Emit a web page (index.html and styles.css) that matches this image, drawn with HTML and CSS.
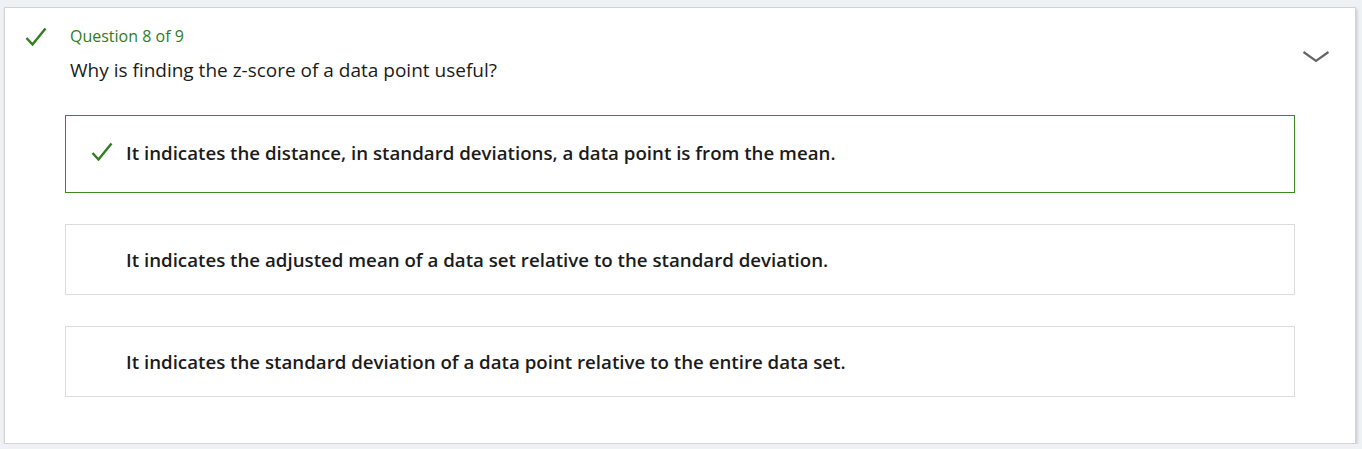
FILE: index.html
```html
<!DOCTYPE html>
<html>
<head>
<meta charset="utf-8">
<link rel="stylesheet" href="styles.css">
</head>
<body>
<div class="card">
  <div class="header">
    <svg class="status-check" width="22" height="20" viewBox="0 0 22 20"><path d="M1.5 11 L7.5 17.5 L20.5 1.5" fill="none" stroke="#2f7d1d" stroke-width="2.4"/></svg>
    <div class="titles">
      <div class="qnum">Question 8 of 9</div>
      <div class="qtext">Why is finding the z-score of a data point useful?</div>
    </div>
    <svg class="chevron" width="28" height="14" viewBox="0 0 28 14"><path d="M1.5 2 L14 11 L26.5 2" fill="none" stroke="#666" stroke-width="2.2"/></svg>
  </div>
  <div class="options">
    <div class="option correct">
      <svg class="opt-check" width="22" height="20" viewBox="0 0 22 20"><path d="M1.5 11 L7.5 17.5 L20.5 1.5" fill="none" stroke="#2f7d1d" stroke-width="2.4"/></svg>
      <span class="opt-text">It indicates the distance, in standard deviations, a data point is from the mean.</span>
    </div>
    <div class="option">
      <span class="opt-text">It indicates the adjusted mean of a data set relative to the standard deviation.</span>
    </div>
    <div class="option">
      <span class="opt-text">It indicates the standard deviation of a data point relative to the entire data set.</span>
    </div>
  </div>
</div>
</body>
</html>
```

FILE: styles.css
```css
html, body {
  margin: 0;
  padding: 0;
}
body {
  background: #eef2f5;
  font-family: "Open Sans", "Noto Sans", sans-serif;
  color: #1b1b1b;
  padding: 7px 6px 0 4px;
}
.card {
  background: #fff;
  border: 1px solid #d0d4d8;
  box-shadow: 1px 2px 3px rgba(0,0,0,0.18);
  height: 437px;
  box-sizing: border-box;
  padding: 0 0 0 20px;
}
.header {
  display: flex;
  align-items: flex-start;
}
.status-check {
  margin-top: 19px;
  flex: none;
}
.titles {
  margin-left: 23px;
  flex: 1;
  padding-top: 17px;
}
.qnum {
  color: #2f7d1d;
  font-size: 16px;
  line-height: 22px;
}
.qtext {
  font-size: 19px;
  line-height: 26px;
  margin-top: 10px;
}
.chevron {
  margin-top: 42px;
  margin-right: 25px;
  flex: none;
}
.options {
  margin: 32px 0 0 40px;
  width: 1230px;
  display: flex;
  flex-direction: column;
  gap: 31px;
}
.option {
  border: 1px solid #dcdcdc;
  height: 71px;
  box-sizing: border-box;
  display: flex;
  align-items: center;
  padding-left: 60px;
}
.option.correct {
  border-color: #3a8a1f;
  height: 78px;
  padding-left: 25px;
  padding-bottom: 4px;
}
.opt-check {
  flex: none;
  margin-right: 13px;
}
.opt-text {
  font-weight: 600;
  font-size: 18.7px;
  color: #1b1b1b;
}
```
